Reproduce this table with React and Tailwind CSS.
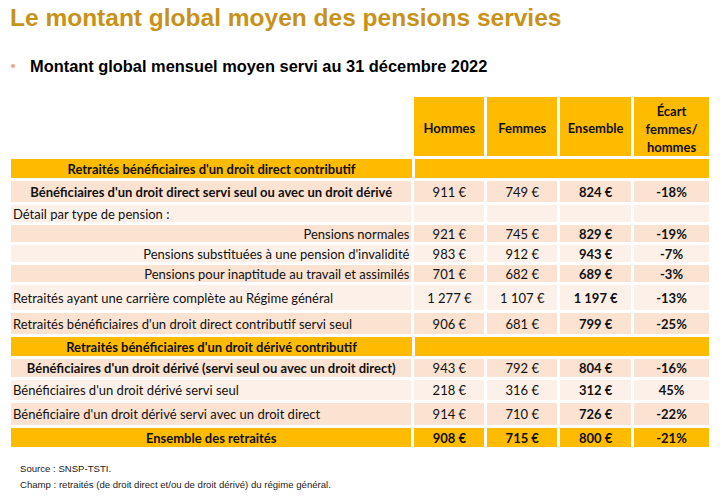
import React from "react";

const ORANGE = "bg-[#ffbb00]";
const DARK = "bg-[#fbe2d1]";
const LIGHT = "bg-[#fdf0e8]";

const rows = [
  { type: "section", label: "Retraités bénéficiaires d'un droit direct contributif", h: "h-[19px]" },
  { type: "data", label: "Bénéficiaires d'un droit direct servi seul ou avec un droit dérivé", bold: true, align: "center", v: ["911 €", "749 €", "824 €", "-18%"], bg: DARK, h: "h-[21px]" },
  { type: "data", label: "Détail par type de pension :", align: "left", v: ["", "", "", ""], bg: LIGHT, h: "h-[17px]" },
  { type: "data", label: "Pensions normales", align: "right", v: ["921 €", "745 €", "829 €", "-19%"], bg: DARK, h: "h-[17px]" },
  { type: "data", label: "Pensions substituées à une pension d'invalidité", align: "right", v: ["983 €", "912 €", "943 €", "-7%"], bg: LIGHT, h: "h-[17px]" },
  { type: "data", label: "Pensions pour inaptitude au travail et assimilés", align: "right", v: ["701 €", "682 €", "689 €", "-3%"], bg: DARK, h: "h-[17px]" },
  { type: "data", label: "Retraités ayant une carrière complète au Régime général", align: "left", v: ["1 277 €", "1 107 €", "1 197 €", "-13%"], bg: LIGHT, h: "h-[25px]" },
  { type: "data", label: "Retraités bénéficiaires d'un droit direct contributif servi seul", align: "left", v: ["906 €", "681 €", "799 €", "-25%"], bg: DARK, h: "h-[21px]" },
  { type: "section", label: "Retraités bénéficiaires d'un droit dérivé contributif", h: "h-[19px]" },
  { type: "data", label: "Bénéficiaires d'un droit dérivé (servi seul ou avec un droit direct)", bold: true, align: "center", v: ["943 €", "792 €", "804 €", "-16%"], bg: DARK, h: "h-[18px]" },
  { type: "data", label: "Bénéficiaires d'un droit dérivé servi seul", align: "left", v: ["218 €", "316 €", "312 €", "45%"], bg: LIGHT, h: "h-[20px]" },
  { type: "data", label: "Bénéficiaire d'un droit dérivé servi avec un droit direct", align: "left", v: ["914 €", "710 €", "726 €", "-22%"], bg: DARK, h: "h-[22px]" },
  { type: "total", label: "Ensemble des retraités", v: ["908 €", "715 €", "800 €", "-21%"], h: "h-[19px]" },
];

function Row({ r }) {
  if (r.type === "section") {
    return (
      <div className={`flex gap-[3px] ${r.h}`}>
        <div className={`w-[401px] ${ORANGE} flex items-center justify-center font-bold pt-[2px]`}>{r.label}</div>
        <div className={`flex-1 ${ORANGE}`}></div>
      </div>
    );
  }
  const isTotal = r.type === "total";
  const bg = isTotal ? ORANGE : r.bg;
  const alignCls = isTotal || r.align === "center" ? "justify-center" : r.align === "right" ? "justify-end pr-[2px]" : "justify-start pl-[2px]";
  return (
    <div className={`flex gap-[3px] ${r.h}`}>
      <div className={`w-[401px] ${bg} flex items-center pt-[2px] ${alignCls} ${isTotal || r.bold ? "font-bold" : ""} whitespace-nowrap`}>
        {r.label}
      </div>
      {r.v.map((x, i) => (
        <div
          key={i}
          className={`${i === 3 ? "w-[75px]" : i === 2 ? "w-[71px]" : "w-[70px]"} ${bg} flex items-center justify-center pt-[2px] whitespace-nowrap ${isTotal || i >= 2 ? "font-bold" : ""}`}
        >
          {x}
        </div>
      ))}
    </div>
  );
}

export default function App() {
  return (
    <div className="w-[722px] h-[502px] bg-white relative overflow-hidden">
      <div className="pt-[3px] pl-[10px]">
        <h1 className="text-[24.5px] leading-[30px] font-bold text-[#c8921a] whitespace-nowrap" style={{ fontFamily: '"Liberation Sans", Arial, sans-serif' }}>
          Le montant global moyen des pensions servies
        </h1>
      </div>
      <div className="mt-[22px] pl-[10px] flex items-center h-[22px]">
        <span className="w-[4px] h-[4px] rounded-full bg-[#f2a08c] ml-[1px]"></span>
        <span className="ml-[15px] text-[16.4px] font-bold text-black whitespace-nowrap" style={{ fontFamily: '"Liberation Sans", Arial, sans-serif' }}>
          Montant global mensuel moyen servi au 31 décembre 2022
        </span>
      </div>
      <div className="mt-[20px] ml-[11px] w-[698px] flex flex-col gap-[3px] text-[13px] text-[#111]" style={{ fontFamily: 'Lato, "Open Sans", sans-serif' }}>
        <div className="flex gap-[3px] h-[59px]">
          <div className="w-[401px]"></div>
          {["Hommes", "Femmes", "Ensemble"].map((t, i) => (
            <div key={t} className={`${i === 2 ? "w-[71px]" : "w-[70px]"} ${ORANGE} flex items-center justify-center font-bold pt-[4px]`}>{t}</div>
          ))}
          <div className={`w-[75px] ${ORANGE} flex items-center justify-center font-bold text-center leading-[18px] pt-[4px]`}>
            Écart<br />femmes/<br />hommes
          </div>
        </div>
        {rows.map((r, i) => (
          <Row key={i} r={r} />
        ))}
      </div>
      <div className="mt-[14px] ml-[20px] text-[9.6px] leading-[16px] text-[#222]" style={{ fontFamily: '"Liberation Sans", Arial, sans-serif' }}>
        <div>Source : SNSP-TSTI.</div>
        <div>Champ : retraités (de droit direct et/ou de droit dérivé) du régime général.</div>
      </div>
    </div>
  );
}
